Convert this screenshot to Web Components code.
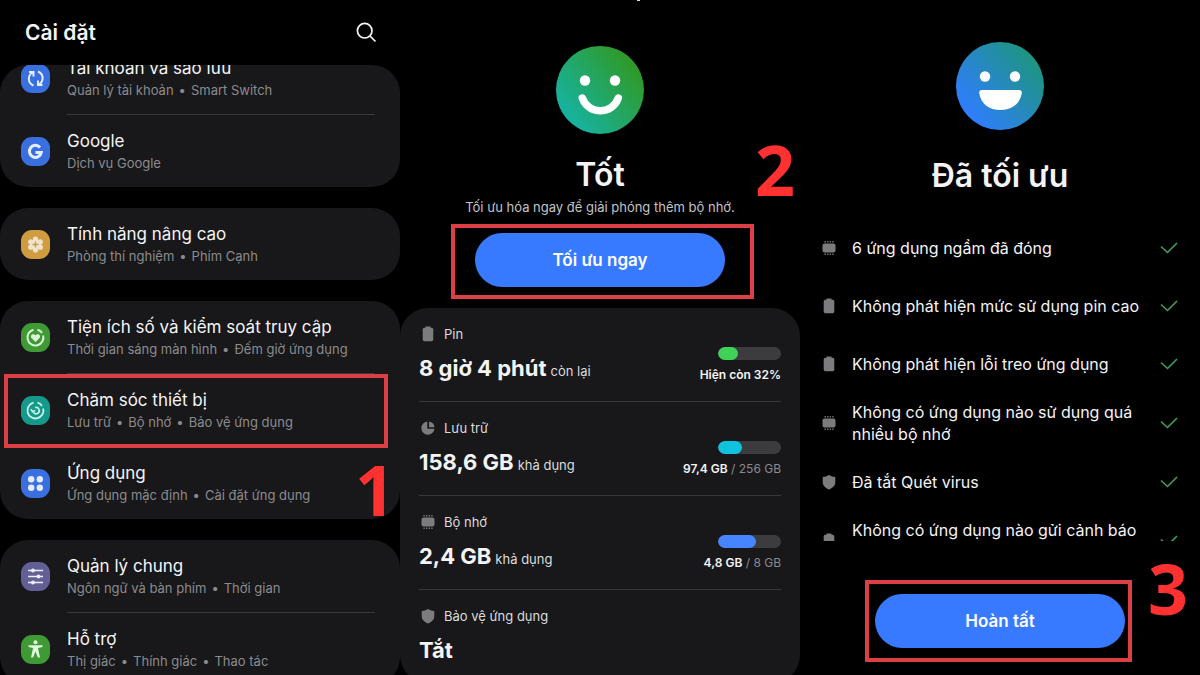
<!DOCTYPE html>
<html lang="vi">
<head>
<meta charset="utf-8">
<title>Chăm sóc thiết bị</title>
<style>
  body {
    margin: 0;
    height: 100vh;
    overflow: hidden;
    background: #000;
    color: #f4f4f6;
    font-family: Inter, "Noto Sans", sans-serif;
  }
</style>
</head>
<body>
<guide-page>
  <phone-screen>
    <settings-header>Cài đặt</settings-header>
    <settings-list>
      <settings-card>
        <settings-row icon="sync" color="#3a6fe0" sub="Quản lý tài khoản|Smart Switch">Tài khoản và sao lưu</settings-row>
        <settings-row icon="google" color="#3a6fe0" sub="Dịch vụ Google">Google</settings-row>
      </settings-card>
      <settings-card>
        <settings-row icon="flower" color="#d09c40" sub="Phòng thí nghiệm|Phím Cạnh">Tính năng nâng cao</settings-row>
      </settings-card>
      <settings-card>
        <settings-row icon="heart" color="#3f9a35" sub="Thời gian sáng màn hình|Đếm giờ ứng dụng">Tiện ích số và kiểm soát truy cập</settings-row>
        <settings-row icon="care" color="#15998a" sub="Lưu trữ|Bộ nhớ|Bảo vệ ứng dụng">Chăm sóc thiết bị
          <mark-box slot="mark" style="inset: 1px 12px -2px 4px"></mark-box>
        </settings-row>
        <settings-row icon="apps" color="#3a6fe0" sub="Ứng dụng mặc định|Cài đặt ứng dụng">Ứng dụng
          <step-number slot="mark" style="right: 5px; top: 18px">1</step-number>
        </settings-row>
      </settings-card>
      <settings-card>
        <settings-row icon="sliders" color="#625f94" sub="Ngôn ngữ và bàn phím|Thời gian">Quản lý chung</settings-row>
        <settings-row icon="person" color="#3f9a35" sub="Thị giác|Thính giác|Thao tác">Hỗ trợ</settings-row>
      </settings-card>
    </settings-list>
  </phone-screen>

  <phone-screen>
    <status-hero face="smile" style="padding-top: 46px">
      Tốt
      <span slot="note">Tối ưu hóa ngay để giải phóng thêm bộ nhớ.</span>
      <step-number slot="mark" style="right: 5px; top: 144px">2</step-number>
    </status-hero>
    <pill-button style="margin-top: 16px">Tối ưu ngay
      <mark-box slot="mark" style="inset: -9px -29px -12px -24px"></mark-box>
    </pill-button>
    <stat-card style="margin-top: 21px">
      <stat-row icon="battery" label="Pin" fill="32" color="#40d158">8 giờ 4 phút<span slot="unit">còn lại</span><b slot="used">Hiện còn 32%</b></stat-row>
      <stat-row icon="pie" label="Lưu trữ" fill="38" color="#0fc3de">158,6 GB<span slot="unit">khả dụng</span><b slot="used">97,4 GB</b><span slot="total"> / 256 GB</span></stat-row>
      <stat-row icon="chip" label="Bộ nhớ" fill="60" color="#4784ff">2,4 GB<span slot="unit">khả dụng</span><b slot="used">4,8 GB</b><span slot="total"> / 8 GB</span></stat-row>
      <stat-row icon="shield" label="Bảo vệ ứng dụng">Tắt</stat-row>
    </stat-card>
    <title-tail></title-tail>
  </phone-screen>

  <phone-screen>
    <status-hero face="grin" style="padding-top: 42px; --title-gap: 24px">Đã tối ưu</status-hero>
    <check-list style="margin-top: 21px">
      <check-row icon="chip">6 ứng dụng ngầm đã đóng</check-row>
      <check-row icon="battery">Không phát hiện mức sử dụng pin cao</check-row>
      <check-row icon="battery">Không phát hiện lỗi treo ứng dụng</check-row>
      <check-row icon="chip">Không có ứng dụng nào sử dụng quá<br>nhiều bộ nhớ</check-row>
      <check-row icon="shield">Đã tắt Quét virus</check-row>
      <check-row icon="battery">Không có ứng dụng nào gửi cảnh báo<br>&nbsp;</check-row>
    </check-list>
    <pill-button style="margin-top: 53px">Hoàn tất
      <mark-box slot="mark" style="inset: -14px -7px -14px -10px"></mark-box>
      <step-number slot="mark" style="right: -63px; top: -31px">3</step-number>
    </pill-button>
  </phone-screen>
</guide-page>

<script>
// Icons - white glyphs for the settings badges, grey ones for status rows
const badges = {
  sync: `<g fill="none" stroke="#e4ecff" stroke-width="2"><path d="M12.5 21.5C6.500 19 6.500 11.500 11.500 8.500M8 8h4.500v4.500"/><path d="M17 7.500c6 2.500 6 10 1 13M21.500 21H17v-4.500"/></g>`,
  google: `<path d="M19 10.500a6 6 0 1 0 1.300 5H14.500" fill="none" stroke="#e4ecff" stroke-width="3"/>`,
  flower: `<g fill="#efe3cc"><circle cx="14.500" cy="14.500" r="5.500"/><circle cx="14.500" cy="9" r="2.600"/><circle cx="14.500" cy="20" r="2.600"/><circle cx="9.700" cy="11.800" r="2.600"/><circle cx="19.300" cy="11.800" r="2.600"/><circle cx="9.700" cy="17.200" r="2.600"/><circle cx="19.300" cy="17.200" r="2.600"/></g><path d="M14.500 11.500v6M11.500 14.500h6" stroke="#c99a45" stroke-width="1.300"/>`,
  heart: `<path d="M16.500 6.700a8 8 0 0 1 4.500 3.200M22.200 12.500a8 8 0 1 1-9.700-5.800" fill="none" stroke="#dcf5d8" stroke-width="2"/><path d="M14.500 19l-4-4c-2-2.500 1.500-5.500 4-2.700 2.500-2.800 6 .2 4 2.700z" fill="#dcf5d8"/>`,
  care: `<path d="M16.500 6.700a8 8 0 0 1 4.500 3.200M22.200 12.500a8 8 0 1 1-9.700-5.800" fill="none" stroke="#c9f5ee" stroke-width="1.800"/><path d="M14 11.600a3.200 3.200 0 1 1-1.500 5M10 13.200l1.500 2.600 2.700-1.200" fill="none" stroke="#c9f5ee" stroke-width="1.600"/>`,
  apps: `<g fill="#e4ecff"><circle cx="10.200" cy="10.200" r="3.200"/><circle cx="18.800" cy="10.200" r="3.200"/><circle cx="10.200" cy="18.800" r="3.200"/><circle cx="18.800" cy="18.800" r="3.200"/></g>`,
  sliders: `<g stroke="#efedff" stroke-width="1.300" fill="#efedff"><path d="M7 8.500h15M7 14.500h15M7 20.500h15"/><circle cx="12" cy="8.500" r="1.300"/><circle cx="17.500" cy="14.500" r="1.300"/><circle cx="12" cy="20.500" r="1.300"/></g>`,
  person: `<circle cx="14.500" cy="7.300" r="2" fill="#e2f7de"/><path d="M7.500 10.300h14v1.700l-4.500 1 2 9.500h-2.200l-2.300-6-2.300 6H10l2-9.500-4.500-1z" fill="#e2f7de"/>`
};
const glyphs = {
  battery: `<path d="M5.500 .5h5v1.200h1.200a1.600 1.600 0 0 1 1.600 1.600v10.300a1.600 1.600 0 0 1-1.600 1.600H4.300a1.600 1.600 0 0 1-1.600-1.600V3.300a1.600 1.600 0 0 1 1.600-1.600h1.200z"/>`,
  pie: `<path d="M7.300 1.500A6.600 6.600 0 1 0 14.500 8.700H7.300z"/><path d="M9 1.500a6.500 6.500 0 0 1 5.500 5.700H9z"/>`,
  chip: `<rect x="1.500" y="3.500" width="13" height="9" rx="2"/><path d="M3.500 1h1.300v1.500H3.500zM6.100 1h1.300v1.500H6.100zM8.700 1H10v1.500H8.700zM11.300 1h1.300v1.500h-1.300zM3.500 13.500h1.300V15H3.500zM6.100 13.500h1.300V15H6.100zM8.700 13.500H10V15H8.700zM11.300 13.500h1.300V15h-1.300z"/>`,
  shield: `<path d="M8 1c2 1.300 4 1.800 6.300 1.900v5.300c0 3.500-2.800 5.700-6.300 7.300-3.500-1.600-6.300-3.800-6.300-7.300V2.900C4 2.800 6 2.300 8 1z"/>`
};
const glyph = name => `<svg width="16" height="16" viewBox="0 0 16 16" fill="#7c7c7f" aria-hidden="true">${glyphs[name]}</svg>`;

// attach an open shadow root and fill it
const paint = (el, html) => {
  el.attachShadow({mode: 'open'}).innerHTML = html;
};

// Page frame
class GuidePage extends HTMLElement {
  constructor() {
    super();
    paint(this, `
      <style>
        :host { display: grid; grid-template-columns: repeat(3, 1fr); height: 100vh; overflow: hidden; }
      </style>
      <slot></slot>`);
  }
}
class PhoneScreen extends HTMLElement {
  constructor() {
    super();
    paint(this, `
      <style>
        :host { display: flex; flex-direction: column; position: relative; min-width: 0; overflow: hidden; }
      </style>
      <slot></slot>`);
  }
}

// Red annotations over the screens
class MarkBox extends HTMLElement {
  constructor() {
    super();
    paint(this, `
      <style>
        :host { display: block; position: absolute; z-index: 1; box-sizing: border-box; border: 4px solid #dc4044; pointer-events: none; }
      </style>`);
  }
}
class StepNumber extends HTMLElement {
  constructor() {
    super();
    paint(this, `
      <style>
        :host { display: block; position: absolute; z-index: 1; font: bold 70px/50px "Open Sans", sans-serif; color: #ff3131; pointer-events: none; }
      </style>
      <slot></slot>`);
  }
}
// dot under the last letter of the title that has scrolled off
class TitleTail extends HTMLElement {
  constructor() {
    super();
    paint(this, `
      <style>
        :host { display: block; position: absolute; top: 0; left: calc(50% + 37px); width: 3px; height: 1px; background: #ddd; }
      </style>`);
  }
}

// Settings screen
class SettingsHeader extends HTMLElement {
  constructor() {
    super();
    paint(this, `
      <style>
        :host { display: flex; align-items: center; justify-content: space-between; height: 65px; flex: none; padding: 0 21px 0 25px; }
        h1 { margin: 0; font-size: 21px; font-weight: 600; line-height: 28px; }
        button { display: flex; padding: 2px; border: 0; background: none; color: inherit; }
      </style>
      <h1><slot></slot></h1>
      <button aria-label="Tìm kiếm"><svg width="22" height="22" viewBox="0 0 22 22" fill="none" stroke="currentColor" stroke-width="1.700"><circle cx="9.700" cy="8.700" r="7.300"/><path d="M15 14l5.500 5.500"/></svg></button>`);
  }
}
class SettingsList extends HTMLElement {
  constructor() {
    super();
    paint(this, `
      <style>
        :host { display: block; flex: 1; min-height: 0; overflow: hidden; border-radius: 28px 28px 0 0; }
        .scrolled { display: flex; flex-direction: column; gap: 21px; margin-top: -23px; }
      </style>
      <div class="scrolled"><slot></slot></div>`);
  }
}
class SettingsCard extends HTMLElement {
  constructor() {
    super();
    paint(this, `
      <style>
        :host { display: block; background: #18181a; border-radius: 28px; }
        ::slotted(:not(:first-child)) { --line: 1px; }
      </style>
      <slot></slot>`);
  }
}
class SettingsRow extends HTMLElement {
  constructor() {
    super();
    const sub = this.getAttribute('sub').split('|').map(t => `<span>${t}</span>`).join('<i>•</i>');
    paint(this, `
      <style>
        :host { display: block; position: relative; }
        .line { height: var(--line, 0px); margin: 0 25px 0 67px; background: #38383a; }
        a { display: flex; align-items: center; gap: 17px; height: 72px; padding-left: 21px; color: inherit; text-decoration: none; }
        .badge { width: 29px; height: 29px; flex: none; border-radius: 11px; background: ${this.getAttribute('color')}; }
        .name { font-size: 17px; line-height: 24px; }
        .sub { display: flex; gap: 5px; font-size: 13px; line-height: 20px; color: #8b8b8e; white-space: nowrap; }
        i { font-style: normal; }
      </style>
      <div class="line"></div>
      <a href="#">
        <svg class="badge" viewBox="0 0 29 29" aria-hidden="true">${badges[this.getAttribute('icon')]}</svg>
        <div><div class="name"><slot></slot></div><div class="sub">${sub}</div></div>
      </a>
      <slot name="mark"></slot>`);
  }
}

// Face + headline
const faces = {
  smile: ['#16b3a3', '#2f9a2a', `<path d="M26.300 52c6 17 30 17 36 0" fill="none" stroke="#fff" stroke-width="7.500" stroke-linecap="round"/>`],
  grin: ['#2f7dff', '#1e9485', `<path d="M26 48h37q3 0 2.800 3C64 62 56 68 44.500 68S25 62 23.200 51q-.2-3 2.800-3z" fill="#fff"/>`]
};
class StatusHero extends HTMLElement {
  constructor() {
    super();
    const [from, to, mouth] = faces[this.getAttribute('face')];
    paint(this, `
      <style>
        :host { display: flex; flex-direction: column; align-items: center; }
        h2 { margin: var(--title-gap, 19px) 0 0; font-size: 32px; font-weight: 600; line-height: 44px; }
        ::slotted([slot=note]) { font-size: 13px; line-height: 20px; color: #c4c4c6; }
      </style>
      <svg width="88" height="88" viewBox="0 0 88 88" aria-hidden="true">
        <defs><linearGradient id="g" x1=".1" y1=".8" x2=".85" y2=".2"><stop stop-color="${from}"/><stop offset="1" stop-color="${to}"/></linearGradient></defs>
        <circle cx="44" cy="44" r="44" fill="url(#g)"/>
        <circle cx="29" cy="34.500" r="5.200" fill="#fff"/><circle cx="59" cy="34.500" r="5.200" fill="#fff"/>${mouth}
      </svg>
      <h2><slot></slot></h2>
      <slot name="note"></slot>
      <slot name="mark"></slot>`);
  }
}
class PillButton extends HTMLElement {
  constructor() {
    super();
    paint(this, `
      <style>
        :host { display: block; position: relative; width: 250px; align-self: center; flex: none; }
        button { width: 100%; height: 54px; border: 0; border-radius: 27px; background: #387aff; color: #fff; font: 600 17px/24px Inter, sans-serif; }
      </style>
      <button><slot></slot></button>
      <slot name="mark"></slot>`);
  }
}

// Device care stats
class StatCard extends HTMLElement {
  constructor() {
    super();
    paint(this, `
      <style>
        :host { display: block; flex: none; padding: 0 19px; background: #18181a; border-radius: 28px; }
        ::slotted(:not(:last-child)) { border-bottom: 1px solid #38383a; }
      </style>
      <slot></slot>`);
  }
}
class StatRow extends HTMLElement {
  constructor() {
    super();
    const fill = this.getAttribute('fill');
    const meter = fill ? `
      <div class="side">
        <div class="bar" role="meter" aria-label="${this.getAttribute('label')}" aria-valuenow="${fill}"><div></div></div>
        <div class="usage"><slot name="used"></slot><slot name="total"></slot></div>
      </div>` : '';
    paint(this, `
      <style>
        :host { display: flex; justify-content: space-between; height: 93px; }
        .label { display: flex; align-items: center; gap: 8px; padding: 16px 0 0 1px; font-size: 13px; line-height: 20px; color: #dcdcde; }
        .value { margin-top: 8px; font-size: 22px; font-weight: 700; line-height: 32px; white-space: nowrap; }
        ::slotted([slot=unit]) { margin-left: 4px; font-size: 13px; font-weight: 400; color: #dcdcde; }
        .side { display: flex; flex-direction: column; align-items: flex-end; gap: 5px; padding-top: 39px; }
        .bar { width: 63px; height: 13px; border-radius: 7px; background: #3c3c3f; overflow: hidden; }
        .bar div { width: ${fill}%; height: 100%; border-radius: 7px; background: ${this.getAttribute('color')}; }
        .usage { font-size: 12px; line-height: 20px; color: #8b8b8e; white-space: pre; }
        ::slotted(b) { font-weight: 600; color: #f4f4f6; }
      </style>
      <div>
        <div class="label">${glyph(this.getAttribute('icon'))}${this.getAttribute('label')}</div>
        <div class="value"><slot></slot><slot name="unit"></slot></div>
      </div>
      ${meter}`);
  }
}

// Result list
class CheckList extends HTMLElement {
  constructor() {
    super();
    paint(this, `
      <style>
        :host { display: block; height: 322px; flex: none; padding: 0 22px 0 21px; overflow: hidden; }
      </style>
      <slot></slot>`);
  }
}
class CheckRow extends HTMLElement {
  constructor() {
    super();
    paint(this, `
      <style>
        :host { display: flex; align-items: center; gap: 15px; min-height: 58px; padding: 8px 0; box-sizing: border-box; font-size: 16px; line-height: 22px; }
        svg { flex: none; }
        div { flex: 1; white-space: nowrap; }
      </style>
      ${glyph(this.getAttribute('icon'))}
      <div><slot></slot></div>
      <svg width="18" height="14" viewBox="0 0 18 14" fill="none" stroke="#3fa05c" stroke-width="1.600" aria-hidden="true"><path d="M1 5.500l6.500 6L17 2"/></svg>`);
  }
}

customElements.define('guide-page', GuidePage);
customElements.define('phone-screen', PhoneScreen);
customElements.define('mark-box', MarkBox);
customElements.define('step-number', StepNumber);
customElements.define('title-tail', TitleTail);
customElements.define('settings-header', SettingsHeader);
customElements.define('settings-list', SettingsList);
customElements.define('settings-card', SettingsCard);
customElements.define('settings-row', SettingsRow);
customElements.define('status-hero', StatusHero);
customElements.define('pill-button', PillButton);
customElements.define('stat-card', StatCard);
customElements.define('stat-row', StatRow);
customElements.define('check-list', CheckList);
customElements.define('check-row', CheckRow);
</script>
</body>
</html>
